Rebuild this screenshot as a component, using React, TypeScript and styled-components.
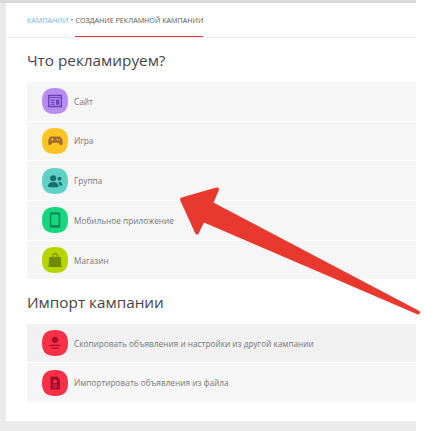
import React from "react";
import styled, { createGlobalStyle } from "styled-components";

const GlobalStyle = createGlobalStyle`
  html, body {
    margin: 0;
    padding: 0;
    background: #fff;
  }
  body {
    font-family: "Open Sans", "Noto Sans", sans-serif;
  }
`;

const Page = styled.div`
  position: relative;
  width: 424px;
  height: 431px;
  overflow: hidden;
`;

const Backdrop = styled.div`
  width: 416px;
  height: 431px;
  box-sizing: border-box;
  padding: 0 0 10px 6px;
  background: #ebebeb;
  border-top: 3px solid #d9d9d9;
`;

const Card = styled.main`
  height: 100%;
  background: #fff;
  display: flex;
  flex-direction: column;
`;

const Header = styled.header`
  height: 35px;
  box-sizing: border-box;
  border-bottom: 1px solid #eeeeee;
  padding-left: 21px;
  display: flex;
  align-items: stretch;
  font-size: 7.15px;
  text-transform: uppercase;
`;

const Crumb = styled.a`
  color: #6db3e0;
  display: flex;
  align-items: center;
  padding-bottom: 1px;
`;

const Separator = styled.span`
  color: #333;
  display: flex;
  align-items: center;
  padding: 0 2.5px 1px;
  font-size: 6px;
`;

const ActiveCrumb = styled.span`
  color: #555;
  display: flex;
  align-items: center;
  border-bottom: 1px solid #e0303c;
`;

const Section = styled.section<{ $top: number }>`
  padding: ${(p) => p.$top}px 0 0 21px;
`;

const Title = styled.h2`
  margin: 0 0 10px;
  height: 24px;
  line-height: 24px;
  font-size: 15.3px;
  font-weight: 400;
  color: #444;
`;

const List = styled.div`
  display: flex;
  flex-direction: column;
  gap: 1.2px;
`;

const Row = styled.div<{ $shade?: boolean }>`
  height: 38.5px;
  display: flex;
  align-items: center;
  gap: 6px;
  padding-left: 15px;
  background: ${(p) => (p.$shade ? "#f1f1f1" : "#f6f6f6")};
`;

const Label = styled.span`
  font-size: 8.25px;
  color: #777;
`;

const IconBox = styled.svg`
  width: 26px;
  height: 26px;
  flex: none;
`;

const Arrow = styled.svg`
  position: absolute;
  left: 0;
  top: 0;
  width: 424px;
  height: 431px;
  pointer-events: none;
`;

const SQUIRCLE = "M13 0C22 0 26 4 26 13C26 22 22 26 13 26C4 26 0 22 0 13C0 4 4 0 13 0Z";

const Icon: React.FC<{ bg: string; scale: number; children: React.ReactNode }> = ({ bg, scale, children }) => (
  <IconBox viewBox="0 0 26 26">
    <path d={SQUIRCLE} fill={bg} />
    <g transform={`translate(13 13) scale(${scale}) translate(-13 -13)`}>{children}</g>
  </IconBox>
);

const SiteGlyph = () => (
  <g fill="#6b3fb8">
    <path fillRule="evenodd" d="M5 6h16v14H5zM6.500 10v8.500h13V10zM6.500 7.500v1.200h13V7.500z" />
    <path d="M8 11.500h4.500v1.500H8zM8 14h4.500v1.200H8zM8 16h4.500v1.200H8zM14 11.500h4v5.700h-4z" />
  </g>
);

const GameGlyph = () => (
  <g>
    <path
      fill="#a26a2c"
      d="M8.500 7.500h9c2.800 0 4 2.300 4.500 5.500.4 2.800-.2 5-1.700 5-1.700 0-2.600-2.800-4.300-2.800h-5c-1.700 0-2.600 2.800-4.300 2.800-1.500 0-2.100-2.200-1.700-5 .5-3.200 1.700-5.500 3.500-5.500z"
    />
    <path fill="#fcc425" d="M8 10.800h1.200v-1.200h1.100v1.200h1.200v1.100h-1.200v1.200H9.200v-1.200H8z" />
    <circle cx="15.500" cy="11.500" r=".9" fill="#fcc425" />
    <circle cx="18" cy="11.500" r=".9" fill="#fcc425" />
  </g>
);

const GroupGlyph = () => (
  <g fill="#1d6d72">
    <circle cx="11" cy="10" r="3.400" />
    <path d="M5 19.500c0-3.800 2.500-5.500 6-5.500s6 1.700 6 5.500c-2 .9-10 .9-12 0z" />
    <circle cx="18" cy="10.500" r="2.200" />
    <path d="M18 14c1.800 0 3.200 1.200 3.200 3.800-.8.3-1.700.4-2.900.4-.2-1.800-.8-3-1.800-3.900.4-.2.900-.3 1.500-.3z" />
  </g>
);

const PhoneGlyph = () => (
  <path
    fill="#0e8a5c"
    fillRule="evenodd"
    d="M9 4.500h8c1 0 1.700.7 1.700 1.700v13.600c0 1-.7 1.700-1.700 1.700H9c-1 0-1.700-.7-1.700-1.700V6.200c0-1 .7-1.700 1.700-1.700zM9 7v11.500h8V7z"
  />
);

const BagGlyph = () => (
  <g>
    <path fill="#6f8c00" d="M6.500 9.500h13l.8 11.500H5.700z" />
    <path fill="none" stroke="#6f8c00" strokeWidth="1.200" d="M10.500 9.500V8c0-3 5-3 5 0v1.500" />
  </g>
);

const CopyGlyph = () => (
  <g fill="#a30f2a">
    <circle cx="13" cy="9.500" r="3.500" />
    <path d="M7 15h12v1.300H7zM9 18h8v1.300H9z" />
  </g>
);

const FileGlyph = () => (
  <g>
    <path fill="#a30f2a" d="M7.500 5h8l3.500 3.500V21H7.500z" />
    <circle cx="13" cy="11" r="2.300" fill="#fb3048" />
    <path fill="#fb3048" d="M9.500 15h7v1.100h-7zM10.500 17.500h5v1.100h-5z" />
  </g>
);

const adItems = [
  { label: "Сайт", bg: "#b88df0", scale: 0.88, glyph: <SiteGlyph /> },
  { label: "Игра", bg: "#fcc425", scale: 0.84, glyph: <GameGlyph /> },
  { label: "Группа", bg: "#5fd2c5", scale: 0.9, glyph: <GroupGlyph /> },
  { label: "Мобильное приложение", bg: "#17d680", scale: 0.92, glyph: <PhoneGlyph /> },
  { label: "Магазин", bg: "#b6d400", scale: 0.88, glyph: <BagGlyph /> },
];

const importItems = [
  { label: "Скопировать объявления и настройки из другой кампании", bg: "#fb3048", scale: 0.9, glyph: <CopyGlyph />, shade: true },
  { label: "Импортировать объявления из файла", bg: "#fb3048", scale: 0.82, glyph: <FileGlyph />, shade: false },
];

export default function App() {
  return (
    <Page>
      <GlobalStyle />
      <Backdrop>
        <Card>
          <Header>
            <Crumb>Кампании</Crumb>
            <Separator>•</Separator>
            <ActiveCrumb>Создание рекламной кампании</ActiveCrumb>
          </Header>
          <Section $top={10}>
            <Title>Что рекламируем?</Title>
            <List>
              {adItems.map((item) => (
                <Row key={item.label}>
                  <Icon bg={item.bg} scale={item.scale}>{item.glyph}</Icon>
                  <Label>{item.label}</Label>
                </Row>
              ))}
            </List>
          </Section>
          <Section $top={10.5}>
            <Title>Импорт кампании</Title>
            <List>
              {importItems.map((item) => (
                <Row key={item.label} $shade={item.shade}>
                  <Icon bg={item.bg} scale={item.scale}>{item.glyph}</Icon>
                  <Label>{item.label}</Label>
                </Row>
              ))}
            </List>
          </Section>
        </Card>
      </Backdrop>
      <Arrow viewBox="0 0 424 431">
        <path
          d="M182 199.500L217 189.500L211 203.500L418 312.500L203 220L197 232.500Z"
          fill="#e8392f"
          stroke="#e8392f"
          strokeWidth="4"
          strokeLinejoin="round"
        />
      </Arrow>
    </Page>
  );
}
